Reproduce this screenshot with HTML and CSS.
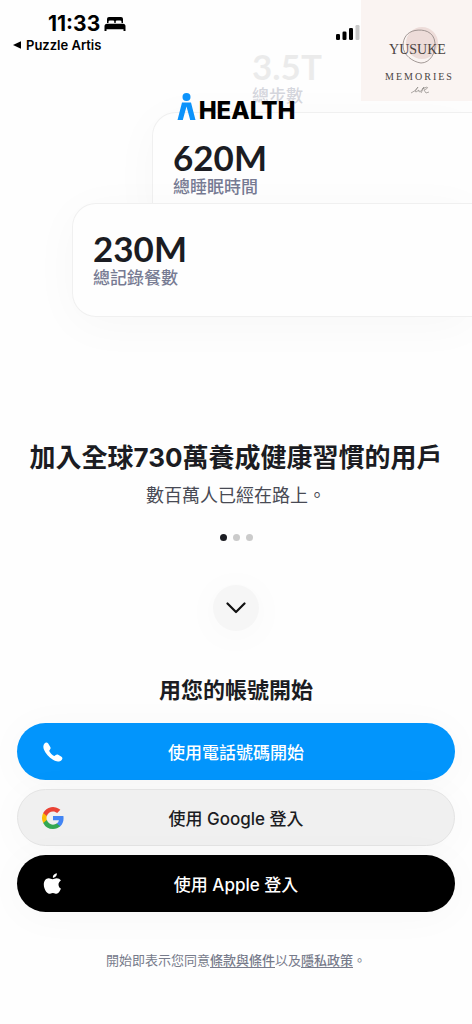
FILE: index.html
```html
<!DOCTYPE html>
<html lang="zh-Hant">
<head>
<meta charset="utf-8">
<meta name="viewport" content="width=device-width, initial-scale=1">
<title>HEALTH</title>
<link rel="stylesheet" href="styles.css">
</head>
<body>
<main class="page">
  <section class="hero">
    <div class="cards">
      <article class="card card-steps"><strong class="value">3.5T</strong><span class="label">總步數</span></article>
      <article class="card card-sleep"><strong class="value">620M</strong><span class="label">總睡眠時間</span></article>
      <article class="card card-meals"><strong class="value">230M</strong><span class="label">總記錄餐數</span></article>
    </div>
    <header class="top">
      <div class="status">
        <div class="status-left">
          <div class="clock">
            <span>11:33</span>
            <svg width="22" height="16" viewBox="0 0 22 16" aria-hidden="true"><path d="M3 7V3Q3 1 5 1H17Q19 1 19 3V7H17.500V5.800Q17.500 4.500 16 4.500H13Q11.700 4.500 11.700 5.800V7H10.300V5.800Q10.300 4.500 9 4.500H6Q4.500 4.500 4.500 5.800V7ZM3 7.700H19Q21.500 7.700 21.500 10.200V15H19.500V13.200H2.500V15H.5V10.200Q.5 7.700 3 7.700Z"/></svg>
          </div>
          <a class="back" href="#"><svg width="8" height="8" viewBox="0 0 8 8" aria-hidden="true"><path d="M0 4 8 .3V7.700Z"/></svg>Puzzle Artis</a>
        </div>
        <svg class="signal" width="26" height="16" viewBox="0 0 26 16" aria-label="訊號"><rect x="1" y="10" width="4" height="6" rx="1.300"/><rect x="7.500" y="7.500" width="4" height="8.500" rx="1.300"/><rect x="14" y="4" width="4" height="12" rx="1.300"/><rect x="20.500" y="1" width="4" height="15" rx="1.300" fill="#c8c8c8"/></svg>
        <div class="brand-tile">
          <svg class="brand-ring" width="38" height="38" viewBox="0 0 38 38" aria-hidden="true"><circle cx="21" cy="17" r="16" fill="#eddcd9"/><path d="M14 4.500C22 3 33 5 34 17C35 27 29 37 20 37C12 36 2 29 2 20C2 12 6 6 14 4.500Z" fill="none" stroke="#8d8380" stroke-width=".8"/></svg>
          <span class="brand-name">YUSUKE</span>
          <span class="brand-sub">MEMORIES</span>
          <svg width="20" height="8" viewBox="0 0 20 8" aria-hidden="true"><path d="M1 7Q6 5 8 1Q4 6 6 6L9 4Q8 7 11 5L14 1L11 7M12 3L17 1Q19 2 14 4L16 7L19 6" fill="none" stroke="#8d8885" stroke-width=".7"/></svg>
        </div>
      </div>
      <div class="logo">
        <svg width="19" height="29" viewBox="0 0 19 29" aria-hidden="true"><circle cx="9.500" cy="5" r="4" fill="#0c93fb"/><path d="M5 10.500H14L18.500 28H13.200L9.500 14.500L5.800 28H.5Z" fill="#0c93fb"/></svg>
        <span>HEALTH</span>
      </div>
    </header>
  </section>

  <section class="intro">
    <h1 class="title">加入全球730萬養成健康習慣的用戶</h1>
    <p class="subtitle">數百萬人已經在路上。</p>
    <div class="dots"><span class="dot dot-active"></span><span class="dot"></span><span class="dot"></span></div>
    <button class="down" type="button" aria-label="向下"><svg width="20" height="12" viewBox="0 0 20 12" aria-hidden="true"><path d="M1.500 1.500 10 10 18.500 1.500" fill="none" stroke="#111" stroke-width="2.200" stroke-linecap="round" stroke-linejoin="round"/></svg></button>
  </section>

  <section class="login">
    <h2 class="login-title">用您的帳號開始</h2>
    <button class="btn btn-phone" type="button">
      <svg width="24" height="24" viewBox="0 0 24 24" aria-hidden="true"><path d="M3.500 3.500C4.500 2.300 6.200 2.200 7.200 3.500L9.300 7C9.900 8 9.600 8.900 8.900 9.700L8.300 10.500C8.200 12.200 11.500 15.500 13.500 16L14.700 15C15.500 14.400 16.300 14.300 17.200 14.800L20.500 16.800C21.700 17.600 21.700 18.900 20.700 19.900C18.500 22 15.500 21.900 12 19.800C8 17.400 4.500 13.700 3 9.800C2 7.200 2.200 5 3.500 3.500Z" fill="#fff"/></svg>
      <span>使用電話號碼開始</span>
    </button>
    <button class="btn btn-google" type="button">
      <svg width="24" height="24" viewBox="0 0 24 24" aria-hidden="true"><path fill="#4285f4" d="M22.560 12.250c0-.78-.07-1.530-.2-2.250H12v4.260h5.920a5.060 5.060 0 0 1-2.200 3.320v2.770h3.570c2.080-1.920 3.270-4.740 3.270-8.100z"/><path fill="#34a853" d="M12 23c2.970 0 5.460-.98 7.280-2.660l-3.570-2.770c-.98.660-2.230 1.060-3.710 1.060-2.860 0-5.290-1.930-6.160-4.530H2.180v2.840A11 11 0 0 0 12 23z"/><path fill="#fbbc05" d="M5.840 14.090a6.600 6.600 0 0 1 0-4.180V7.070H2.180a11 11 0 0 0 0 9.860z"/><path fill="#ea4335" d="M12 5.380c1.620 0 3.060.56 4.210 1.640l3.150-3.150A11 11 0 0 0 2.180 7.070l3.660 2.840C6.710 7.310 9.140 5.380 12 5.380z"/></svg>
      <span>使用 Google 登入</span>
    </button>
    <button class="btn btn-apple" type="button">
      <svg width="24" height="24" viewBox="0 0 24 24" aria-hidden="true"><path fill="#fff" d="M17.500 12.500c0-2 1.100-3.200 2.400-4.100-1-1.400-2.500-2.100-4.300-2.100-1.700 0-2.800 1-3.900 1s-2.400-1-4-1C4.800 6.400 2.800 8.800 2.800 12.600c0 4.300 2.900 9.200 5.400 9.200 1.300 0 1.900-.9 3.700-.9s2.300.9 3.600.9c1.900 0 3.600-2.900 4.400-5.200-1.500-.7-2.400-2.200-2.400-4.100zM15.900 1.300c-2.300.2-4.300 2.200-4 4.500 2.300.1 4.200-2.200 4-4.500z"/></svg>
      <span>使用 Apple 登入</span>
    </button>
    <p class="terms">開始即表示您同意<a href="#">條款與條件</a>以及<a href="#">隱私政策</a>。</p>
  </section>
</main>
</body>
</html>
```
FILE: styles.css
```css
* { box-sizing: border-box; }

body {
  margin: 0;
  background: #fefefe;
  color: #1b1c22;
  font-family: Inter, "Noto Sans CJK TC", sans-serif;
}

.page {
  display: flex;
  flex-direction: column;
  min-height: 100vh;
  overflow: hidden;
}

/* Header is layered over the stacked cards in one grid cell */
.hero { display: grid; }
.cards, .top { grid-area: 1 / 1; min-width: 0; }
.cards {
  display: flex;
  flex-direction: column;
  padding-top: 21px;
}

.card {
  display: flex;
  flex-direction: column;
  height: 114px;
  padding: 24px 20px;
  border: 1px solid #f0f0f0;
  border-right: 0;
  border-radius: 24px 0 0 24px;
  background: #fefefe;
  box-shadow: 0 8px 48px rgba(0, 0, 0, 0.03);
}
.card + .card { margin-top: -23px; }
.card-steps { margin-left: 231px; border-color: transparent; box-shadow: none; }
.card-sleep { margin-left: 152px; }
.card-meals { margin-left: 72px; }
.card-steps .value { opacity: 0.08; }
.card-steps .label { opacity: 0.3; }

.value {
  font-family: Lato, sans-serif;
  font-size: 35px;
  font-weight: 700;
  line-height: 40px;
}
.label {
  color: #777b93;
  font-size: 17px;
  font-weight: 500;
  line-height: 20px;
}

.top { z-index: 1; color: #000; }
.status {
  display: flex;
  height: 92px;
}
.status-left { flex: 1; padding: 12px 0 0 13px; }
.clock {
  display: flex;
  align-items: center;
  gap: 4px;
  padding-left: 35px;
  font-size: 21px;
  font-weight: 700;
  line-height: 24px;
}
.back {
  display: flex;
  align-items: center;
  gap: 5px;
  color: #000;
  font-size: 13px;
  font-weight: 600;
  line-height: 18px;
  text-decoration: none;
}
.signal { margin: 24px 0 0; }

.brand-tile {
  display: grid;
  justify-items: center;
  align-content: start;
  width: 111px;
  height: 101px;
  padding: 26px 0 0 6px;
  background: #faf4f2;
  color: #4b4442;
  font-family: "Liberation Serif", serif;
}
.brand-ring, .brand-name { grid-area: 1 / 1; align-self: center; }
.brand-name {
  padding: 10px 4px 0 0;
  font-size: 14px;
  line-height: 18px;
}
.brand-sub {
  padding: 6px 0 2px;
  font-size: 10px;
  letter-spacing: 2px;
  line-height: 14px;
}

.logo {
  display: flex;
  justify-content: center;
  align-items: flex-end;
  gap: 3px;
  font-size: 24px;
  font-weight: 800;
  line-height: 20px;
}

.intro {
  display: flex;
  flex-direction: column;
  align-items: center;
  padding-top: 122px;
}
.title {
  margin: 0;
  font-size: 26px;
  font-weight: 700;
  line-height: 38px;
  white-space: nowrap;
}
.subtitle {
  margin: 6px 0 0;
  color: #484a54;
  font-size: 18px;
  line-height: 26px;
}
.dots { display: flex; gap: 6px; margin-top: 25px; }
.dot {
  width: 7px;
  height: 7px;
  border-radius: 50%;
  background: #cbcbcb;
}
.dot-active { background: #1b1c22; }
.down {
  display: grid;
  place-items: center;
  width: 46px;
  height: 46px;
  margin-top: 44px;
  padding: 0;
  border: 0;
  border-radius: 50%;
  background: #f6f6f6;
  box-shadow: 0 4px 40px rgba(0, 0, 0, 0.03);
}

.login {
  display: flex;
  flex-direction: column;
  gap: 9px;
  padding: 43px 17px 0;
}
.login-title {
  margin: 0 0 8px;
  font-size: 22px;
  font-weight: 700;
  line-height: 32px;
  text-align: center;
}
.btn {
  display: grid;
  grid-template-columns: 24px 1fr 24px;
  align-items: center;
  height: 57px;
  padding: 0 24px;
  border: 0;
  border-radius: 29px;
  font: inherit;
  font-size: 17px;
  font-weight: 500;
  box-shadow: 0 4px 40px rgba(0, 0, 0, 0.03);
}
.btn-phone { background: #0295fc; color: #fff; }
.btn-google { border: 1px solid #e4e4e4; padding: 0 23px; background: #f0f0f0; color: #1b1c22; }
.btn-apple { background: #000; color: #fff; }

.terms {
  margin: 29px 0 0;
  color: #777b8b;
  font-size: 13px;
  line-height: 20px;
  text-align: center;
}
.terms a { color: inherit; font-weight: 500; text-underline-offset: 2px; }
```
